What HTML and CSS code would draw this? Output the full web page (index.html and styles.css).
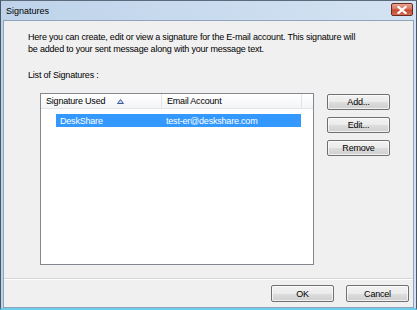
FILE: index.html
```html
<!DOCTYPE html>
<html>
<head>
<meta charset="utf-8">
<link rel="stylesheet" href="styles.css">
</head>
<body>
<div class="window">
  <div class="titlebar">
    <span class="title">Signatures</span>
    <span class="close">
      <svg width="10" height="8" viewBox="0 0 10 8"><path d="M1.5 1 L8.5 7 M8.5 1 L1.5 7" stroke="#ffffff" stroke-width="2.2" stroke-linecap="square"/></svg>
    </span>
  </div>
  <div class="client">
    <p class="desc">Here you can create, edit or view a signature for the E-mail account. This signature will<br>be added to your sent message along with your message text.</p>
    <div class="label">List of Signatures :</div>
    <div class="main">
      <div class="listbox">
        <div class="header">
          <div class="col col1">Signature Used
            <svg class="sort" width="7" height="5" viewBox="0 0 7 5"><path d="M3.5 0.5 L6.5 4.5 L0.5 4.5 Z" fill="#c9d3ec" stroke="#3c5a9a" stroke-width="1"/></svg>
          </div>
          <div class="col col2">Email Account</div>
          <div class="col col3"></div>
        </div>
        <div class="rows">
          <div class="row selected">
            <div class="cell c1">DeskShare</div>
            <div class="cell c2">test-er@deskshare.com</div>
          </div>
        </div>
      </div>
      <div class="side">
        <button class="btn">Add...</button>
        <button class="btn">Edit...</button>
        <button class="btn">Remove</button>
      </div>
    </div>
    <div class="footer">
      <button class="btn fbtn">OK</button>
      <button class="btn fbtn">Cancel</button>
    </div>
  </div>
</div>
</body>
</html>
```
FILE: styles.css
```css
html, body {
  margin: 0;
  padding: 0;
  width: 417px;
  height: 310px;
  overflow: hidden;
  font-family: "Liberation Sans", Arial, sans-serif;
  font-size: 9px;
  color: #000;
}
.window {
  width: 417px;
  height: 310px;
  box-sizing: border-box;
  border-left: 1px solid #4a5663;
  border-top: 1px solid #5b6b7c;
  border-right: 1px solid #4a5663;
  border-bottom: 2px solid #6ecbea;
  background: linear-gradient(to right, #bed3ea, #d4e3f3);
  display: flex;
  flex-direction: column;
  padding: 0 2px 0 2px;
}
.titlebar {
  height: 19px;
  display: flex;
  align-items: center;
  justify-content: space-between;
  flex: none;
}
.title {
  padding-left: 3px;
  font-size: 9px;
  color: #000;
  margin-top: 1px;
}
.close {
  width: 22px;
  height: 13px;
  margin-right: 1px;
  margin-top: -2px;
  box-sizing: border-box;
  border: 1px solid #6b2a20;
  border-radius: 2px;
  background: linear-gradient(to bottom, #e8a493 0%, #d9715c 45%, #c44a2f 55%, #d46e52 100%);
  display: flex;
  align-items: center;
  justify-content: center;
}
.close svg { display: block; }
.client {
  flex: 1;
  background: #f0f0f0;
  border: 1px solid #8fa3ba;
  display: flex;
  flex-direction: column;
  min-height: 0;
  letter-spacing: -0.2px;
}
.desc {
  margin: 0;
  padding: 10px 0 0 24px;
  line-height: 12px;
}
.label {
  padding: 14px 0 0 24px;
  line-height: 12px;
}
.main {
  display: flex;
  padding: 12px 0 0 36px;
  gap: 13px;
}
.listbox {
  width: 274px;
  height: 172px;
  box-sizing: border-box;
  border: 1px solid #828790;
  background: #fff;
  display: flex;
  flex-direction: column;
}
.header {
  height: 14px;
  display: flex;
  background: linear-gradient(to bottom, #ffffff, #f4f5f7);
  border-bottom: 1px solid #e3e4e6;
  flex: none;
}
.col {
  box-sizing: border-box;
  height: 100%;
  display: flex;
  align-items: center;
  border-right: 1px solid #e3e4e6;
  line-height: 12px;
}
.col1 { width: 121px; padding-left: 5px; }
.col2 { width: 140px; padding-left: 5px; }
.col3 { flex: 1; border-right: none; }
.sort { margin-left: 12px; display: block; }
.rows {
  padding: 5px 0 0 15px;
}
.row {
  display: flex;
  height: 13px;
  align-items: center;
  width: 245px;
}
.row.selected {
  background: #3399ff;
  color: #fff;
}
.cell { line-height: 12px; }
.c1 { width: 106px; padding-left: 4px; box-sizing: border-box; }
.c2 { padding-left: 4px; }
.side {
  display: flex;
  flex-direction: column;
  gap: 7px;
  padding-top: 1px;
}
.btn {
  width: 63px;
  height: 16px;
  box-sizing: border-box;
  border: 1px solid #707070;
  border-radius: 2px;
  background: linear-gradient(to bottom, #f2f2f2 0%, #ebebeb 50%, #dddddd 51%, #cfcfcf 100%);
  font-family: "Liberation Sans", Arial, sans-serif;
  font-size: 9px;
  letter-spacing: -0.2px;
  color: #000;
  padding: 0;
  line-height: 12px;
  box-shadow: inset 0 0 0 1px rgba(255,255,255,0.7);
}
.footer {
  margin-top: auto;
  border-top: 1px solid #d5d5d5;
  box-shadow: inset 0 1px 0 #ffffff;
  display: flex;
  justify-content: flex-end;
  gap: 12px;
  padding: 6px 4px 5px 0;
}
.fbtn {
  width: 63px;
  height: 17px;
}
```
